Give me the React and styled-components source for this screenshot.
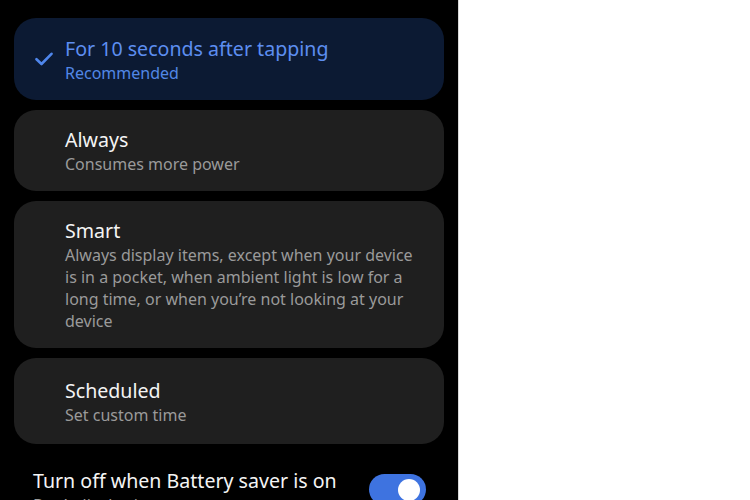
import React from "react";
import styled, { createGlobalStyle } from "styled-components";

const Global = createGlobalStyle`
  html, body { margin: 0; padding: 0; background: #fff; }
  body { font-family: "Noto Sans", "Open Sans", sans-serif; overflow: hidden; }
`;

const Page = styled.div`
  width: 750px;
  height: 500px;
  display: flex;
  background: #fff;
`;

const Panel = styled.div`
  width: 459px;
  height: 500px;
  background: #000;
  border-right: 1px solid #d8d8d8;
  box-sizing: border-box;
  padding: 18px 14px 0 14px;
  display: flex;
  flex-direction: column;
  gap: 10px;
  overflow: hidden;
`;

const Card = styled.div`
  display: flex;
  align-items: flex-start;
  border-radius: 22px;
  background: ${(p) => (p.$selected ? "#0c1a33" : "#1f1f1f")};
  padding: ${(p) => p.$pad || "16px 20px 16px 0"};
`;

const CheckSlot = styled.div`
  width: 51px;
  flex: none;
  display: flex;
  justify-content: center;
  padding-top: 17px;
  padding-left: 9px;
  box-sizing: border-box;
`;

const Texts = styled.div`
  display: flex;
  flex-direction: column;
`;

const Title = styled.div`
  font-size: 19.6px;
  line-height: 27px;
  color: ${(p) => (p.$selected ? "#5d8ef0" : "#f4f4f4")};
`;

const Sub = styled.div`
  font-size: 16px;
  line-height: 22px;
  color: ${(p) => (p.$selected ? "#5287e6" : "#9a9a9a")};
`;

const ToggleRow = styled.div`
  display: flex;
  align-items: flex-start;
  justify-content: space-between;
  padding: 13px 18px 0 19px;
`;

const Switch = styled.div`
  width: 57px;
  height: 31px;
  border-radius: 16px;
  background: #3e73e0;
  flex: none;
  margin-top: 7px;
  display: flex;
  align-items: center;
  justify-content: flex-end;
  padding-right: 6px;
  box-sizing: border-box;
`;

const Thumb = styled.div`
  width: 22px;
  height: 22px;
  border-radius: 50%;
  background: #fff;
`;

const Check = () => (
  <svg width="18" height="14" viewBox="0 0 18 14" fill="none">
    <path d="M1.5 7.2 L6.5 12 L16.5 1.8" stroke="#4f86ec" strokeWidth="2.6" strokeLinecap="round" strokeLinejoin="round" />
  </svg>
);

const options = [
  { title: "For 10 seconds after tapping", sub: "Recommended", selected: true, pad: "17px 20px 16px 0" },
  { title: "Always", sub: "Consumes more power" },
  {
    title: "Smart",
    sub: "Always display items, except when your device is in a pocket, when ambient light is low for a long time, or when you’re not looking at your device",
  },
  { title: "Scheduled", sub: "Set custom time", pad: "19px 20px 18px 0" },
];

export default function App() {
  return (
    <>
      <Global />
      <Page>
        <Panel>
          {options.map((o) => (
            <Card key={o.title} $selected={o.selected} $pad={o.pad}>
              <CheckSlot>{o.selected && <Check />}</CheckSlot>
              <Texts>
                <Title $selected={o.selected}>{o.title}</Title>
                <Sub $selected={o.selected}>{o.sub}</Sub>
              </Texts>
            </Card>
          ))}
          <ToggleRow>
            <Texts>
              <Title>Turn off when Battery saver is on</Title>
              <Sub>Don’t display items to save power</Sub>
            </Texts>
            <Switch>
              <Thumb />
            </Switch>
          </ToggleRow>
        </Panel>
      </Page>
    </>
  );
}
